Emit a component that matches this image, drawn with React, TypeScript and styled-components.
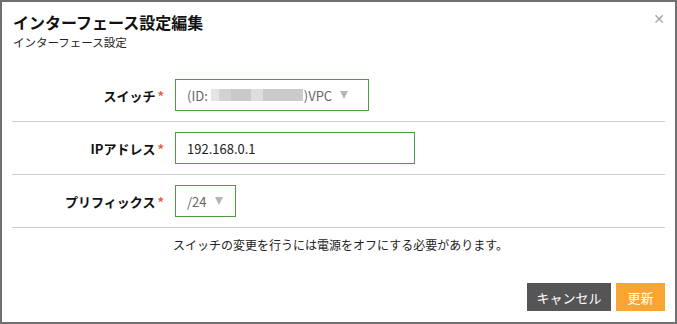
import React from "react";
import styled, { createGlobalStyle } from "styled-components";

const Global = createGlobalStyle`
  html, body { margin: 0; padding: 0; background: #fff; }
  * { box-sizing: border-box; }
  body { font-family: "Noto Sans CJK JP", "Noto Sans", sans-serif; color: #222; }
`;

const Dialog = styled.div`
  width: 677px;
  height: 324px;
  border: 2px solid #707070;
  background: #fff;
  position: relative;
  display: flex;
  flex-direction: column;
  padding: 0 10px 0 10px;
`;

const Header = styled.div`
  padding: 8px 0 0 1px;
  height: 67px;
`;

const Title = styled.h1`
  margin: 0;
  font-size: 16px;
  font-weight: 700;
  line-height: 24px;
  color: #111;
`;

const Subtitle = styled.div`
  font-size: 11.5px;
  line-height: 16px;
  color: #222;
`;

const Close = styled.span`
  position: absolute;
  top: 9px;
  right: 10px;
  font-size: 14px;
  color: #a8a8a8;
  line-height: 16px;
  font-family: "DejaVu Sans", sans-serif;
`;

const Row = styled.div`
  display: grid;
  grid-template-columns: 152px 1fr;
  column-gap: 11px;
  align-items: center;
  padding: 10px 0;
  border-bottom: 1px solid #cfcfcf;
`;

const Label = styled.label`
  text-align: right;
  font-size: 13px;
  font-weight: 700;
  color: #111;
`;

const Req = styled.span`
  color: #e8603c;
  font-weight: 700;
  margin-left: 2px;
`;

const Box = styled.div<{ $w: number }>`
  width: ${(p) => p.$w}px;
  height: 32px;
  border: 1px solid #4e9b45;
  display: flex;
  align-items: center;
  padding: 0 10px 0 11px;
  font-size: 13px;
  color: #222;
`;

const SelectText = styled.span`
  color: #666;
  display: flex;
  align-items: center;
`;

const Redacted = styled.span`
  display: inline-block;
  width: 92px;
  height: 12px;
  margin: 0 1px 0 3px;
  background: linear-gradient(
    90deg,
    #e4e4e4 0 8px,
    #d2d2d2 8px 20px,
    #c9c9c9 20px 40px,
    #dedede 40px 52px,
    #cbcbcb 52px 92px
  );
`;

const Arrow = styled.span`
  margin-left: 8px;
  width: 0;
  height: 0;
  border-left: 4.5px solid transparent;
  border-right: 4.5px solid transparent;
  border-top: 8px solid #b5b5b5;
`;

const Notice = styled.div`
  text-align: center;
  font-size: 12px;
  line-height: 16px;
  padding-top: 9px;
  padding-left: 4px;
  color: #222;
`;

const Footer = styled.div`
  margin-top: auto;
  display: flex;
  justify-content: flex-end;
  gap: 5px;
  padding: 0 0 11px 0;
`;

const Button = styled.button<{ $primary?: boolean; $w: number }>`
  width: ${(p) => p.$w}px;
  height: 28px;
  border: none;
  padding: 0;
  font-family: inherit;
  font-size: 13px;
  color: #fff;
  background: ${(p) => (p.$primary ? "#f9a532" : "#555555")};
  cursor: pointer;
`;

export default function App() {
  return (
    <>
      <Global />
      <Dialog>
        <Close>✕</Close>
        <Header>
          <Title>インターフェース設定編集</Title>
          <Subtitle>インターフェース設定</Subtitle>
        </Header>
        <Row>
          <Label>
            スイッチ<Req>*</Req>
          </Label>
          <Box $w={194}>
            <SelectText>
              (ID:<Redacted />)VPC
            </SelectText>
            <Arrow />
          </Box>
        </Row>
        <Row>
          <Label>
            IPアドレス<Req>*</Req>
          </Label>
          <Box $w={240}>192.168.0.1</Box>
        </Row>
        <Row>
          <Label>
            プリフィックス<Req>*</Req>
          </Label>
          <Box $w={61}>
            <SelectText>/24</SelectText>
            <Arrow />
          </Box>
        </Row>
        <Notice>スイッチの変更を行うには電源をオフにする必要があります。</Notice>
        <Footer>
          <Button $w={84}>キャンセル</Button>
          <Button $primary $w={49}>
            更新
          </Button>
        </Footer>
      </Dialog>
    </>
  );
}
